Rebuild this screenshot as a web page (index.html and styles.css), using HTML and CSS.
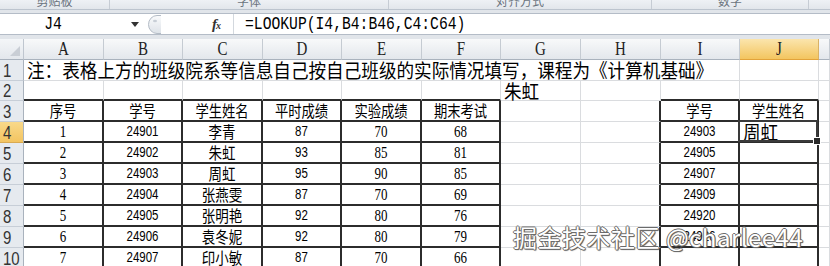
FILE: index.html
```html
<!DOCTYPE html>
<html lang="zh-CN">
<head>
<meta charset="utf-8">
<title>LOOKUP</title>
<link rel="stylesheet" href="styles.css">
</head>
<body>
<div class="ribbon">
  <div class="grp g1"><span>剪贴板</span></div>
  <div class="grp g2"><span>字体</span></div>
  <div class="grp g3"><span>对齐方式</span></div>
  <div class="grp g4"><span>数字</span></div>
  <div class="grp g5"></div>
</div>
<div class="fbar">
  <div class="fbox">
    <div class="namebox"><span class="nbtext">J4</span><svg class="arrow" width="8" height="5" viewBox="0 0 8 5"><path d="M0 0H8L4 5Z" fill="#333"/></svg></div>
    <svg class="knob" width="16" height="21" viewBox="0 0 16 21"><defs><linearGradient id="kg" x1="0" y1="0" x2="0" y2="1"><stop offset="0" stop-color="#fafbfc"/><stop offset="1" stop-color="#dde2e8"/></linearGradient></defs><path d="M15 1.5H11A8.5 9 0 0 0 11 19.5H15" fill="url(#kg)" stroke="#b4bcc6"/><ellipse cx="9" cy="7" rx="2" ry="1.2" fill="#c8ced6"/></svg>
    <div class="fx"><span class="ff">f</span><span class="fxx">x</span></div>
    <div class="formula"><span>=LOOKUP(I4,B4:B46,C4:C64)</span></div>
  </div>
</div>
<div class="sheet">
  <div class="corner"></div>
  <div class="ch"><span>A</span></div>
  <div class="ch"><span>B</span></div>
  <div class="ch"><span>C</span></div>
  <div class="ch"><span>D</span></div>
  <div class="ch"><span>E</span></div>
  <div class="ch"><span>F</span></div>
  <div class="ch"><span>G</span></div>
  <div class="ch"><span>H</span></div>
  <div class="ch"><span>I</span></div>
  <div class="ch on"><span>J</span></div>
  <div class="ch"></div>

  <div class="rh"><span>1</span></div>
  <div class="c span9 l big"><span>注：表格上方的班级院系等信息自己按自己班级的实际情况填写，课程为《计算机基础》</span></div>
  <div class="c"></div>
  <div class="c"></div>

  <div class="rh"><span>2</span></div>
  <div class="c tp"></div><div class="c tp"></div><div class="c tp"></div><div class="c tp"></div><div class="c tp"></div><div class="c tp"></div>
  <div class="c l big btm"><span>朱虹</span></div>
  <div class="c"></div>
  <div class="c tp"></div><div class="c tp"></div>
  <div class="c"></div>

  <div class="rh"><span>3</span></div>
  <div class="c t hz"><span>序号</span></div>
  <div class="c t hz"><span>学号</span></div>
  <div class="c t hz"><span>学生姓名</span></div>
  <div class="c t hz"><span>平时成绩</span></div>
  <div class="c t hz"><span>实验成绩</span></div>
  <div class="c t hz"><span>期末考试</span></div>
  <div class="c"></div>
  <div class="c lb"></div>
  <div class="c t hz"><span>学号</span></div>
  <div class="c t hz"><span>学生姓名</span></div>
  <div class="c"></div>

  <div class="rh on"><span>4</span></div>
  <div class="c t sr"><span>1</span></div>
  <div class="c t sn"><span>24901</span></div>
  <div class="c t nm"><span>李青</span></div>
  <div class="c t sn"><span>87</span></div>
  <div class="c t sr"><span>70</span></div>
  <div class="c t sr"><span>68</span></div>
  <div class="c"></div>
  <div class="c lb"></div>
  <div class="c t sn"><span>24903</span></div>
  <div class="c t l big sel"><span>周虹</span></div>
  <div class="c"></div>

  <div class="rh"><span>5</span></div>
  <div class="c t sr"><span>2</span></div>
  <div class="c t sn"><span>24902</span></div>
  <div class="c t nm"><span>朱虹</span></div>
  <div class="c t sn"><span>93</span></div>
  <div class="c t sr"><span>85</span></div>
  <div class="c t sr"><span>81</span></div>
  <div class="c"></div>
  <div class="c lb"></div>
  <div class="c t sn"><span>24905</span></div>
  <div class="c t"></div>
  <div class="c"></div>

  <div class="rh"><span>6</span></div>
  <div class="c t sr"><span>3</span></div>
  <div class="c t sn"><span>24903</span></div>
  <div class="c t nm"><span>周虹</span></div>
  <div class="c t sn"><span>95</span></div>
  <div class="c t sr"><span>90</span></div>
  <div class="c t sr"><span>85</span></div>
  <div class="c"></div>
  <div class="c lb"></div>
  <div class="c t sn"><span>24907</span></div>
  <div class="c t"></div>
  <div class="c"></div>

  <div class="rh"><span>7</span></div>
  <div class="c t sr"><span>4</span></div>
  <div class="c t sn"><span>24904</span></div>
  <div class="c t nm"><span>张燕雯</span></div>
  <div class="c t sn"><span>87</span></div>
  <div class="c t sr"><span>70</span></div>
  <div class="c t sr"><span>69</span></div>
  <div class="c"></div>
  <div class="c lb"></div>
  <div class="c t sn"><span>24909</span></div>
  <div class="c t"></div>
  <div class="c"></div>

  <div class="rh"><span>8</span></div>
  <div class="c t sr"><span>5</span></div>
  <div class="c t sn"><span>24905</span></div>
  <div class="c t nm"><span>张明艳</span></div>
  <div class="c t sn"><span>92</span></div>
  <div class="c t sr"><span>80</span></div>
  <div class="c t sr"><span>76</span></div>
  <div class="c"></div>
  <div class="c lb"></div>
  <div class="c t sn"><span>24920</span></div>
  <div class="c t"></div>
  <div class="c"></div>

  <div class="rh"><span>9</span></div>
  <div class="c t sr"><span>6</span></div>
  <div class="c t sn"><span>24906</span></div>
  <div class="c t nm"><span>袁冬妮</span></div>
  <div class="c t sn"><span>92</span></div>
  <div class="c t sr"><span>80</span></div>
  <div class="c t sr"><span>79</span></div>
  <div class="c"></div>
  <div class="c lb"></div>
  <div class="c t sn"><span>24926</span></div>
  <div class="c t"></div>
  <div class="c"></div>

  <div class="rh"><span>10</span></div>
  <div class="c t sr"><span>7</span></div>
  <div class="c t sn"><span>24907</span></div>
  <div class="c t nm"><span>印小敏</span></div>
  <div class="c t sn"><span>87</span></div>
  <div class="c t sr"><span>70</span></div>
  <div class="c t sr"><span>66</span></div>
  <div class="c"></div>
  <div class="c lb"></div>
  <div class="c t"></div>
  <div class="c t"></div>
  <div class="c"></div>
</div>
<div class="watermark">掘金技术社区 @charlee44</div>
</body>
</html>
```
FILE: styles.css
```css
* { box-sizing: border-box; margin: 0; padding: 0; }
html, body { width: 830px; height: 266px; overflow: hidden; background: #fff; }
body { position: relative; font-family: "Liberation Sans", sans-serif; color: #000; }

/* ribbon strip */
.ribbon { display: flex; height: 10px; background: linear-gradient(#eef1f5, #e2e6eb); border-bottom: 1px solid #bcc4ce; overflow: hidden; }
.grp { display: flex; justify-content: center; align-items: flex-start; border-right: 1px solid #c6ccd4; font: 12px "Noto Sans CJK SC", sans-serif; color: #6a737d; overflow: hidden; }
.grp span { display: block; height: 9px; line-height: 2px; overflow: hidden; }
.g1 { width: 110px; }
.g2 { width: 279px; }
.g3 { width: 263px; }
.g4 { width: 157px; }
.g5 { flex: 1; border-right: 0; }

/* formula bar */
.fbar { height: 29px; padding: 3px 0 4px; background: #e1e5ea; }
.fbox { display: flex; align-items: center; height: 22px; background: #fff; border-top: 1px solid #b4bcc7; border-bottom: 1px solid #b4bcc7; }
.namebox { display: flex; align-items: center; width: 145px; height: 100%; }
.nbtext { width: 106px; text-align: center; font: 14.7px/1 "Liberation Mono", monospace; display: inline-block; transform: scaleY(1.3); }
.arrow { margin-left: 25px; }
.knob { display: block; margin-left: 1px; }
.fx { display: flex; align-items: baseline; margin-left: 50px; width: 20px; font-family: "Liberation Serif", serif; font-style: italic; font-weight: bold; color: #333; }
.ff { font-size: 15px; }
.fxx { font-size: 10px; margin-left: -1px; }
.formula { flex: 1; height: 100%; display: flex; align-items: center; border-left: 1px solid #d3d8de; padding-left: 11px; margin-left: 1px; }
.formula span { display: inline-block; font: 14.7px/1 "Liberation Mono", monospace; transform: scaleY(1.3); white-space: nowrap; }

/* sheet grid */
.sheet { display: grid; grid-template-columns: 24px 80px 79px 80px 79px 80px 79px 80px 80px 79px 79px 1fr; grid-template-rows: 21px 21px 20px 21px repeat(7, 21px); }
.corner { background: linear-gradient(#f4f6f8, #e3e7ec); border-right: 1px solid #bfc6cf; border-bottom: 1px solid #a9b2bd; position: relative; }
.corner::after { content: ""; position: absolute; right: 3px; bottom: 3px; width: 0; height: 0; border-left: 10px solid transparent; border-bottom: 10px solid #c9ced5; }
.ch { display: flex; align-items: center; justify-content: center; background: linear-gradient(#f8f9fa, #e3e7ec); border-right: 1px solid #c5cbd2; border-bottom: 1px solid #a9b2bd; font: 15px/1 "Liberation Serif", serif; color: #222; }
.ch span { display: inline-block; transform: scaleY(1.2); }
.ch.on { background: linear-gradient(#fbe5ad, #f3c55f); border-bottom: 1px solid #e2a33a; border-right-color: #d9b266; }
.rh { display: flex; align-items: center; padding-left: 3px; background: #e6eaef; border-right: 1px solid #a9b2bd; border-bottom: 1px solid #c7ced7; font: 15px/1 "Liberation Sans", sans-serif; color: #333; }
.rh span { display: inline-block; transform: scaleY(1.2); }
.rh.on { background: linear-gradient(#f9d98a, #f3c461); border-bottom-color: #d9aa52; }

.c { display: flex; align-items: center; justify-content: center; border-right: 1px solid #dadcdf; border-bottom: 1px solid #dadcdf; white-space: nowrap; overflow: visible; line-height: 1; }
.c span { display: inline-block; transform: scaleY(1.2); }
.c.l { justify-content: flex-start; padding-left: 3px; }
.c.btm { align-items: flex-end; padding-bottom: 0; }
.span9 { grid-column: span 9; }
.t { border-right: 2px solid #2c2c2c; border-bottom: 2px solid #2c2c2c; }
.tp { border-bottom: 2px solid #2c2c2c; }
.lb { border-right: 2px solid #2c2c2c; }

.big { font: 17.6px/1 "Noto Sans CJK SC", sans-serif; }
.big span { transform: scaleY(1.1); }
.hz { font: 13.3px/1 "Noto Sans CJK SC", sans-serif; }
.nm { font: 13.5px/1 "Noto Sans CJK SC", sans-serif; }
.sn { font: 11.5px/1 "Liberation Sans", sans-serif; }
.sr { font: 13px/1 "Liberation Serif", serif; }
.sr span, .sn span { transform: scaleY(1.25); }

.sel { position: relative; }
.sel::after { content: ""; position: absolute; left: -2px; top: -2px; right: -1px; bottom: -1px; border: 2px solid #3a3a3a; }
.sel::before { content: ""; position: absolute; right: -4px; bottom: -4px; width: 6px; height: 6px; background: #2a2a2a; border: 1px solid #fff; z-index: 2; }

/* watermark */
.watermark { position: absolute; left: 513px; top: 222px; font: 24px/30px "Noto Sans CJK SC", sans-serif; color: #fff; white-space: nowrap; letter-spacing: 0.5px;
  text-shadow: 1px 0 0 #6b6b6b, -1px 0 0 #6b6b6b, 0 1px 0 #6b6b6b, 0 -1px 0 #6b6b6b, 1px 1px 1px #444; }
```
